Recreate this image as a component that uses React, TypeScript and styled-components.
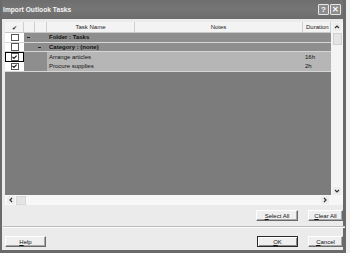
import React from "react";
import styled, { createGlobalStyle } from "styled-components";

const Global = createGlobalStyle`
  html, body { margin: 0; padding: 0; background: #f2f2f2; }
  body { font-family: "Liberation Sans", Arial, sans-serif; }
`;

const Window = styled.div`
  width: 346px;
  height: 253px;
  box-sizing: border-box;
  background: #6a6a6a;
  padding: 0 3px 3px 2px;
  display: flex;
  flex-direction: column;
`;

const TitleBar = styled.div`
  height: 19px;
  display: flex;
  align-items: center;
  padding: 0 2px 0 1px;
  background: linear-gradient(#6e6e6e, #767676 50%, #6c6c6c);
`;

const Title = styled.div`
  flex: 1;
  color: #f4f4f4;
  font-size: 6.6px;
  font-weight: bold;
  letter-spacing: 0.05px;
`;

const CapButton = styled.div`
  width: 9px;
  height: 9px;
  border: 1px solid #e6e6e6;
  border-radius: 1px;
  background: #8c8c8c;
  color: #fafafa;
  font-size: 8px;
  font-weight: bold;
  display: flex;
  align-items: center;
  justify-content: center;
  margin-left: 1px;
  line-height: 1;
`;

const Body = styled.div`
  flex: 1;
  background: #ebebeb;
  padding: 3px 1px 0 3px;
  display: flex;
  flex-direction: column;
`;

const GridBox = styled.div`
  height: 183px;
  width: 338px;
  display: grid;
  grid-template-columns: 326px 12px;
  grid-template-rows: 173px 10px;
  background: #f6f6f6;
`;

const Table = styled.div`
  background: #7c7c7c;
  display: flex;
  flex-direction: column;
  overflow: hidden;
`;

const Cols = "19px 11px 12px 88px 168px 28px";

const HeaderRow = styled.div`
  display: grid;
  grid-template-columns: ${Cols};
  height: 11px;
  background: #f3f3f3;
  border-bottom: 1px solid #c8c8c8;
  box-sizing: border-box;
`;

const HeadCell = styled.div<{ $left?: boolean }>`
  border-right: 1px solid #cfcfcf;
  font-size: 6px;
  color: #222;
  display: flex;
  align-items: center;
  justify-content: ${(p) => (p.$left ? "flex-start" : "center")};
  padding-left: ${(p) => (p.$left ? "3px" : "0")};
`;

const Row = styled.div`
  display: grid;
  grid-template-columns: ${Cols};
  height: 8.7px;
  border-bottom: 0.6px solid #d6d6d6;
`;

const Cell = styled.div<{ $bg: string; $bold?: boolean }>`
  background: ${(p) => p.$bg};
  font-size: 6px;
  font-weight: ${(p) => (p.$bold ? "bold" : "normal")};
  color: #111;
  display: flex;
  align-items: center;
  padding-left: 2px;
  white-space: nowrap;
  overflow: hidden;
  border-right: 1px solid transparent;
`;

const CheckCell = styled.div<{ $focus?: boolean }>`
  background: #ffffff;
  display: flex;
  align-items: center;
  justify-content: center;
  box-sizing: border-box;
  border: ${(p) => (p.$focus ? "1.5px solid #000" : "none")};
`;

const Box = styled.div`
  width: 6px;
  height: 5.5px;
  border: 1px solid #555;
  background: #fff;
  display: flex;
  align-items: center;
  justify-content: center;
`;

const Minus = styled.div`
  width: 3px;
  height: 1px;
  background: #222;
  margin-left: 1px;
`;

const VScroll = styled.div`
  background: #f4f4f4;
  display: flex;
  flex-direction: column;
  align-items: center;
  padding-top: 1px;
`;

const ScrollBtn = styled.div`
  width: 8px;
  height: 8px;
  display: flex;
  align-items: center;
  justify-content: center;
  background: #ececec;
  border-radius: 1px;
`;

const VThumb = styled.div`
  width: 7px;
  height: 10px;
  margin-top: 2px;
  border: 1px solid #d0d0d0;
  background: #e4e4e4;
  flex: none;
`;

const Spacer = styled.div`
  flex: 1;
`;

const HScroll = styled.div`
  background: #f7f7f7;
  display: flex;
  align-items: center;
  padding: 0 2px 0 2px;
`;

const HThumb = styled.div`
  width: 8px;
  height: 7px;
  margin-left: 1px;
  border: 1px solid #d8d8d8;
  background: #e4e4e4;
`;

const Corner = styled.div`
  background: #f7f7f7;
`;

const ButtonRow = styled.div<{ $split?: boolean }>`
  display: flex;
  justify-content: ${(p) => (p.$split ? "space-between" : "flex-end")};
  width: 338px;
  margin-top: 5px;
`;

const Group = styled.div`
  display: flex;
  gap: 10px;
`;

const Button = styled.div<{ $w: number; $default?: boolean }>`
  width: ${(p) => p.$w}px;
  height: 11px;
  box-sizing: border-box;
  background: #efefef;
  border: 1px solid;
  border-color: ${(p) => (p.$default ? "#2a2a2a" : "#ffffff #6a6a6a #6a6a6a #ffffff")};
  box-shadow: ${(p) => (p.$default ? "inset 1px 1px 0 #fff, inset -1px -1px 0 #8a8a8a" : "inset -1px -1px 0 #a8a8a8")};
  font-size: 6px;
  color: #111;
  display: flex;
  align-items: center;
  justify-content: center;
  u { text-decoration: underline; }
`;

const Separator = styled.div`
  height: 0;
  border-top: 1px solid #bdbdbd;
  border-bottom: 1px solid #fafafa;
  margin: 5px 0 0 -2px;
  width: 342px;
`;

const Chevron: React.FC<{ dir: "up" | "down" | "left" | "right" }> = ({ dir }) => {
  const rot = { up: 0, right: 90, down: 180, left: 270 }[dir];
  return (
    <svg width="6" height="6" viewBox="0 0 6 6">
      <path d="M1 4 L3 2 L5 4" fill="none" stroke="#333" strokeWidth="1.2" transform={`rotate(${rot} 3 3)`} />
    </svg>
  );
};

const Tick = () => (
  <svg width="5" height="4" viewBox="0 0 5 4">
    <path d="M0.5 2 L2 3.4 L4.6 0.6" fill="none" stroke="#111" strokeWidth="1.1" />
  </svg>
);

const FOLDER = "#8e8e8e";
const TASK = "#b6b6b6";

export default function App() {
  return (
    <>
      <Global />
      <Window>
        <TitleBar>
          <Title>Import Outlook Tasks</Title>
          <CapButton>?</CapButton>
          <CapButton>✕</CapButton>
        </TitleBar>
        <Body>
          <GridBox>
            <Table>
              <HeaderRow>
                <HeadCell>✔</HeadCell>
                <HeadCell />
                <HeadCell />
                <HeadCell>Task Name</HeadCell>
                <HeadCell>Notes</HeadCell>
                <HeadCell $left>Duration</HeadCell>
              </HeaderRow>
              <Row>
                <CheckCell>
                  <Box />
                </CheckCell>
                <Cell $bg={FOLDER}>
                  <Minus />
                </Cell>
                <Cell $bg={FOLDER} />
                <Cell $bg={FOLDER} $bold>
                  Folder : Tasks
                </Cell>
                <Cell $bg={FOLDER} />
                <Cell $bg={FOLDER} />
              </Row>
              <Row>
                <CheckCell>
                  <Box />
                </CheckCell>
                <Cell $bg={FOLDER} />
                <Cell $bg={FOLDER}>
                  <Minus />
                </Cell>
                <Cell $bg={FOLDER} $bold>
                  Category : (none)
                </Cell>
                <Cell $bg={FOLDER} />
                <Cell $bg={FOLDER} />
              </Row>
              <Row>
                <CheckCell $focus>
                  <Box>
                    <Tick />
                  </Box>
                </CheckCell>
                <Cell $bg={FOLDER} />
                <Cell $bg={FOLDER} />
                <Cell $bg={TASK}>Arrange articles</Cell>
                <Cell $bg={TASK} />
                <Cell $bg={TASK}>16h</Cell>
              </Row>
              <Row>
                <CheckCell>
                  <Box>
                    <Tick />
                  </Box>
                </CheckCell>
                <Cell $bg={FOLDER} />
                <Cell $bg={FOLDER} />
                <Cell $bg={TASK}>Procure supplies</Cell>
                <Cell $bg={TASK} />
                <Cell $bg={TASK}>2h</Cell>
              </Row>
            </Table>
            <VScroll>
              <ScrollBtn>
                <Chevron dir="up" />
              </ScrollBtn>
              <VThumb />
              <Spacer />
              <ScrollBtn>
                <Chevron dir="down" />
              </ScrollBtn>
            </VScroll>
            <HScroll>
              <ScrollBtn>
                <Chevron dir="left" />
              </ScrollBtn>
              <HThumb />
              <Spacer />
              <ScrollBtn>
                <Chevron dir="right" />
              </ScrollBtn>
            </HScroll>
            <Corner />
          </GridBox>
          <ButtonRow>
            <Group>
              <Button $w={42}>
                <span>
                  <u>S</u>elect All
                </span>
              </Button>
              <Button $w={35}>
                <span>
                  <u>C</u>lear All
                </span>
              </Button>
            </Group>
          </ButtonRow>
          <Separator />
          <ButtonRow $split style={{ marginTop: "8px" }}>
            <Button $w={41}>
              <span>
                <u>H</u>elp
              </span>
            </Button>
            <Group>
              <Button $w={41} $default>
                <span>
                  <u>O</u>K
                </span>
              </Button>
              <Button $w={35}>
                <span>
                  <u>C</u>ancel
                </span>
              </Button>
            </Group>
          </ButtonRow>
        </Body>
      </Window>
    </>
  );
}
